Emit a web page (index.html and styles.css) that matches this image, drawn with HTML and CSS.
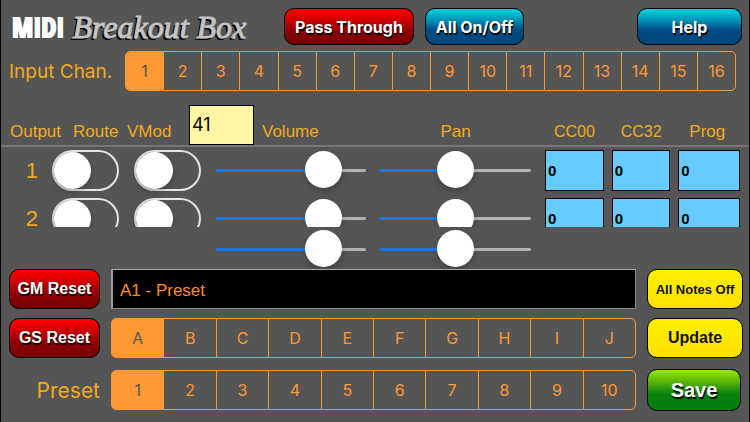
FILE: index.html
```html
<!DOCTYPE html>
<html lang="en">
  <head>
    <meta charset="utf-8" />
    <title>MIDI Breakout Box</title>
    <link rel="stylesheet" href="styles.css">
  </head>
  <body>
    <header class="topbar">
      <h1 class="logo">
        <span class="logo-midi">MIDI</span>
        <span class="logo-name">Breakout Box</span>
      </h1>
      <button class="btn red pass">Pass Through</button>
      <button class="btn blue all">All On/Off</button>
      <button class="btn blue help">Help</button>
    </header>

    <div class="channel-row">
      <span class="big-label" id="chan-label">Input Chan.</span>
      <div class="segments" role="radiogroup" aria-labelledby="chan-label">
        <label><input type="radio" name="chan" checked />1</label>
        <label><input type="radio" name="chan" />2</label>
        <label><input type="radio" name="chan" />3</label>
        <label><input type="radio" name="chan" />4</label>
        <label><input type="radio" name="chan" />5</label>
        <label><input type="radio" name="chan" />6</label>
        <label><input type="radio" name="chan" />7</label>
        <label><input type="radio" name="chan" />8</label>
        <label><input type="radio" name="chan" />9</label>
        <label><input type="radio" name="chan" />10</label>
        <label><input type="radio" name="chan" />11</label>
        <label><input type="radio" name="chan" />12</label>
        <label><input type="radio" name="chan" />13</label>
        <label><input type="radio" name="chan" />14</label>
        <label><input type="radio" name="chan" />15</label>
        <label><input type="radio" name="chan" />16</label>
      </div>
    </div>

    <!-- Column headings -->
    <div class="headings">
      <span>Output</span>
      <span id="route">Route</span>
      <label id="vmod" for="vmod-value">VMod</label>
      <input class="vmod-value" id="vmod-value" type="text" value="41" />
      <span id="volume">Volume</span>
      <span class="center" id="pan">Pan</span>
      <div class="codes code-names">
        <span id="cc00">CC00</span>
        <span id="cc32">CC32</span>
        <span class="prog" id="prog">Prog</span>
      </div>
    </div>

    <!-- Outputs -->
    <div class="outputs">
      <div class="output">
        <span class="number">1</span>
        <input class="toggle" type="checkbox" aria-labelledby="route" />
        <input class="toggle" type="checkbox" aria-labelledby="vmod" />
        <input class="slider volume" type="range" max="127" value="100" aria-labelledby="volume" />
        <input class="slider pan" type="range" max="127" value="64" aria-labelledby="pan" />
        <div class="codes">
          <input type="text" value="0" aria-labelledby="cc00" />
          <input type="text" value="0" aria-labelledby="cc32" />
          <input type="text" value="0" aria-labelledby="prog" />
        </div>
      </div>
      <div class="output">
        <span class="number">2</span>
        <input class="toggle" type="checkbox" aria-labelledby="route" />
        <input class="toggle" type="checkbox" aria-labelledby="vmod" />
        <input class="slider volume" type="range" max="127" value="100" aria-labelledby="volume" />
        <input class="slider pan" type="range" max="127" value="64" aria-labelledby="pan" />
        <div class="codes">
          <input type="text" value="0" aria-labelledby="cc00" />
          <input type="text" value="0" aria-labelledby="cc32" />
          <input type="text" value="0" aria-labelledby="prog" />
        </div>
      </div>
    </div>

    <!-- Master sliders -->
    <div class="output master">
      <input class="slider volume" type="range" max="127" value="100" aria-labelledby="volume" />
      <input class="slider pan" type="range" max="127" value="64" aria-labelledby="pan" />
    </div>

    <div class="panel">
      <button class="btn red">GM Reset</button>
      <input class="preset-name" type="text" value="A1 - Preset" aria-label="Preset name" />
      <button class="btn yellow small">All Notes Off</button>

      <button class="btn red">GS Reset</button>
      <div class="segments" role="radiogroup" aria-label="Bank">
        <label><input type="radio" name="bank" checked />A</label>
        <label><input type="radio" name="bank" />B</label>
        <label><input type="radio" name="bank" />C</label>
        <label><input type="radio" name="bank" />D</label>
        <label><input type="radio" name="bank" />E</label>
        <label><input type="radio" name="bank" />F</label>
        <label><input type="radio" name="bank" />G</label>
        <label><input type="radio" name="bank" />H</label>
        <label><input type="radio" name="bank" />I</label>
        <label><input type="radio" name="bank" />J</label>
      </div>
      <button class="btn yellow">Update</button>
    </div>

    <div class="panel presets">
      <span class="preset-label" id="preset-label">Preset</span>
      <div class="segments" role="radiogroup" aria-labelledby="preset-label">
        <label><input type="radio" name="preset" checked />1</label>
        <label><input type="radio" name="preset" />2</label>
        <label><input type="radio" name="preset" />3</label>
        <label><input type="radio" name="preset" />4</label>
        <label><input type="radio" name="preset" />5</label>
        <label><input type="radio" name="preset" />6</label>
        <label><input type="radio" name="preset" />7</label>
        <label><input type="radio" name="preset" />8</label>
        <label><input type="radio" name="preset" />9</label>
        <label><input type="radio" name="preset" />10</label>
      </div>
      <button class="btn green">Save</button>
    </div>
  </body>
</html>
```
FILE: styles.css
```css
:root {
  --bg: #555;
  --orange: #ff9933;
  --gold: #f2ab1b;
  --blue: #1878e8;
}

* {
  box-sizing: border-box;
}

html {
  background-color: var(--bg);
}

body {
  margin: 0;
  min-height: 100vh;
  border: solid #000;
  border-width: 0 1px;
  background-color: var(--bg);
  color: var(--gold);
  font-family: "Liberation Sans", Arial, sans-serif;
  font-size: 17px;
}

input,
button {
  margin: 0;
  font-family: inherit;
  border-radius: 0;
}

/* Top bar */
.topbar {
  display: flex;
  gap: 11px;
  padding: 8px 7px 0 11px;
}

.logo {
  display: flex;
  align-items: center;
  gap: 8px;
  width: 261px;
  margin: 0;
  line-height: 30px;
  white-space: nowrap;
}

.logo-midi {
  color: #fff;
  font-family: "Liberation Sans Narrow", "Open Sans Condensed", Impact, sans-serif;
  font-size: 27px;
  font-weight: bold;
  -webkit-text-stroke: 2px #fff;
  text-shadow: -1px 1px 1px #000;
}

.logo-name {
  color: #c4c4c4;
  font-family: "Liberation Serif", serif;
  font-size: 32px;
  font-style: italic;
  font-weight: normal;
  -webkit-text-stroke: 1px #c4c4c4;
  text-shadow: -2px 2px 0 #000;
}

.btn {
  height: 40px;
  padding: 0;
  border: 1px solid #000;
  border-radius: 10px;
  color: #fff;
  font-size: 16px;
  font-weight: bold;
  white-space: nowrap;
  text-shadow: 1px 2px 1px #000;
  cursor: pointer;
}

.topbar .btn {
  height: 37px;
  font-family: Inter, sans-serif;
}

.pass {
  width: 130px;
}

.all {
  width: 99px;
}

.help {
  width: 105px;
  margin-left: auto;
}

.red {
  background: linear-gradient(#f80000, #e00000 20%, #8c0000 65%, #780000);
}

.blue {
  background: linear-gradient(#00d4e0, #0098b8 30%, #004a84 60%, #004a80);
}

.yellow {
  background: linear-gradient(#fff000, #ffe000);
  color: #111;
  text-shadow: none;
}

.small {
  font-size: 13px;
}

.green {
  width: 94px;
  height: 42px;
  background: linear-gradient(#98e808, #58b408 30%, #08800c 60%, #007c10);
  font-size: 20px;
}

/* Segmented controls */
.segments {
  display: flex;
  flex: 1;
  height: 40px;
  border: 1px solid var(--orange);
  border-radius: 5px;
  overflow: hidden;
}

.segments label {
  flex: 1 1 0;
  display: flex;
  align-items: center;
  justify-content: center;
  color: var(--orange);
  font-family: Inter, sans-serif;
  font-size: 16px;
  cursor: pointer;
}

.segments label + label {
  border-left: 1px solid var(--orange);
}

.segments label:has(:checked) {
  background-color: var(--orange);
  color: var(--bg);
}

.segments input {
  appearance: none;
  width: 0;
  height: 0;
}

.channel-row {
  display: flex;
  align-items: center;
  padding: 6px 13px 0 8px;
}

.big-label {
  width: 116px;
  font-family: Inter, sans-serif;
  font-size: 19px;
  white-space: nowrap;
}

/* Column headings */
.headings {
  display: grid;
  grid-template-columns: 63px 54px 62px 73px 118fr 151fr 209fr;
  align-items: end;
  padding: 14px 9px 0 9px;
  border-bottom: 2px solid #777;
  line-height: 26px;
}

.headings .codes {
  margin-left: 14px;
}

.center {
  text-align: center;
}

.vmod-value {
  width: 65px;
  height: 40px;
  padding: 0 2px 2px;
  border: 1px solid #000;
  background-color: #fff6a6;
  color: #000;
  font-family: Inter, sans-serif;
  font-size: 18px;
}

.codes {
  display: grid;
  grid-template-columns: 59fr 59fr 62fr;
  gap: 8px;
}

.code-names {
  font-size: 16px;
}

.code-names span {
  padding-left: 9px;
}

.code-names .prog {
  padding-left: 11px;
  font-size: 17px;
}

/* Outputs */
.outputs {
  display: flex;
  flex-direction: column;
  gap: 7px;
  height: 80px;
  padding-top: 3px;
  overflow: hidden;
}

.output {
  flex: none;
  display: grid;
  grid-template-columns: 29px 68px 68px 150fr 151fr 195fr;
  column-gap: 14px;
  align-items: center;
  padding: 0 9px 0 8px;
}

.number {
  font-size: 22px;
  line-height: 16px;
  text-align: right;
}

.codes input {
  width: 100%;
  min-width: 0;
  height: 41px;
  padding: 0 2px;
  border: 1px solid #000;
  background-color: #66ccff;
  color: #000;
  font-size: 15px;
  font-weight: bold;
}

.toggle {
  appearance: none;
  width: 67px;
  height: 41px;
  border: 2px solid #e4e4e4;
  border-radius: 21px;
}

.toggle::before {
  content: "";
  display: block;
  width: 37px;
  height: 37px;
  border-radius: 50%;
  background-color: #fff;
  box-shadow: 0 3px 6px rgba(0, 0, 0, 0.25);
}

.toggle:checked::before {
  margin-left: auto;
}

.slider {
  appearance: none;
  width: 100%;
  height: 37px;
  background: none;
}

.slider::-webkit-slider-runnable-track {
  height: 3px;
  border-radius: 2px;
  background: linear-gradient(to right, var(--blue) var(--fill), #b4b4b4 var(--fill));
}

.slider::-webkit-slider-thumb {
  appearance: none;
  width: 37px;
  height: 37px;
  margin-top: -18px;
  border-radius: 50%;
  background-color: #fff;
  box-shadow: 0 3px 6px rgba(0, 0, 0, 0.25);
}

.volume {
  --fill: 72%;
}

.pan {
  --fill: 50%;
}

.master {
  padding-top: 4px;
}

.master .volume {
  grid-column: 4;
}

/* Presets */
.panel {
  display: grid;
  grid-template-columns: 91px 1fr 96px;
  gap: 9px 11px;
  align-items: center;
  padding: 1px 6px 0 8px;
}

.preset-name {
  width: 100%;
  height: 40px;
  padding: 3px 7px 0;
  border: 1px solid #888;
  border-top-color: #aaa;
  border-left: 2px solid #999;
  background-color: #000;
  color: #ff8c1a;
  font-size: 17px;
}

.presets {
  padding-top: 11px;
}

.preset-label {
  font-family: Inter, sans-serif;
  font-size: 21px;
  text-align: right;
}
```
